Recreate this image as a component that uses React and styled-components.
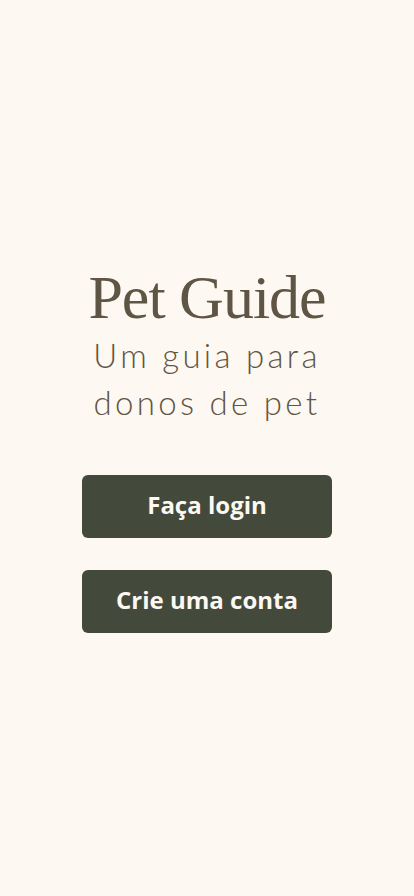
import styled, { createGlobalStyle } from 'styled-components';

const GlobalStyle = createGlobalStyle`
  html, body {
    margin: 0;
    padding: 0;
    background: #fdf8f2;
  }
`;

const Home = () => {
  return (
    <>
      <GlobalStyle />
      <Container>
        <Hero>
          <Title>Pet Guide</Title>
          <Subtitle>Um guia para<br />donos de pet</Subtitle>
        </Hero>
        <Actions>
          <Button>Faça login</Button>
          <Button>Crie uma conta</Button>
        </Actions>
      </Container>
    </>
  );
};

const Container = styled.main`
  min-height: 100vh;
  display: flex;
  flex-direction: column;
  align-items: center;
  justify-content: center;
  background: #fdf8f2;
`;

const Hero = styled.div`
  display: flex;
  flex-direction: column;
  align-items: center;
  text-align: center;
  color: #5f5544;
`;

const Title = styled.h1`
  margin: 0;
  font-family: "Liberation Serif", serif;
  font-weight: 400;
  font-size: 62px;
  line-height: 66px;
  letter-spacing: -1px;
`;

const Subtitle = styled.p`
  margin: 2px 0 0;
  font-family: "Lato", sans-serif;
  font-weight: 300;
  font-size: 33px;
  line-height: 47px;
  letter-spacing: 3.3px;
`;

const Actions = styled.div`
  display: flex;
  flex-direction: column;
  gap: 32px;
  margin-top: 49px;
`;

const Button = styled.button`
  width: 250px;
  height: 63px;
  padding: 0 0 3px;
  border: none;
  border-radius: 6px;
  background: #434a3b;
  color: #fdf8f2;
  font-family: "Open Sans", sans-serif;
  font-weight: 700;
  font-size: 24px;
  cursor: pointer;
  display: flex;
  align-items: center;
  justify-content: center;
`;

export default Home;
